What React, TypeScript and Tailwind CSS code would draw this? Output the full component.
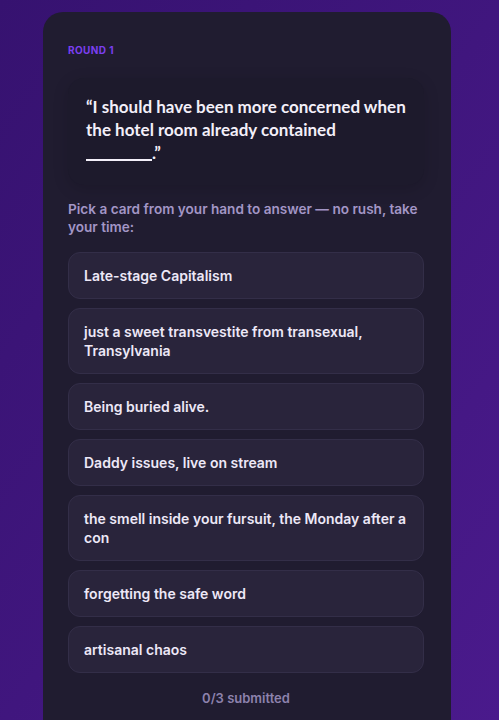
const cards = [
  'Late-stage Capitalism',
  'just a sweet transvestite from transexual, Transylvania',
  'Being buried alive.',
  'Daddy issues, live on stream',
  'the smell inside your fursuit, the Monday after a con',
  'forgetting the safe word',
  'artisanal chaos',
];

export default function App() {
  return (
    <div className="flex h-[720px] flex-col overflow-hidden bg-gradient-to-br from-[#361270] to-[#4a1a8c] px-[43px] pt-[12px] font-['Inter',sans-serif]">
      <div className="w-[408px] flex-1 rounded-t-[20px] bg-[#201c30] pl-[25px] pr-[27px] pt-[31px] pb-6">
        <div className="text-[10px] font-bold tracking-[0.04em] leading-[14px] text-[#7b3ff0]">ROUND 1</div>

        <div className="mt-[21px] rounded-2xl bg-[#1d1a2c] px-[18px] pt-[17px] pb-[21px] shadow-[0_4px_16px_rgba(0,0,0,0.15)]">
          <p className="font-['Lato',sans-serif] text-[17px] font-bold leading-[23px] text-[#f3eff9]">
            “I should have been more concerned when the hotel room already contained{' '}
            <span className="whitespace-nowrap">
              <span className="inline-block w-[66px] border-b-2 border-[#f3eff9] align-[-2px]" />.”
            </span>
          </p>
        </div>

        <p className="mt-[15px] text-[13.6px] font-semibold leading-[18px] text-[#a396c6]">
          Pick a card from your hand to answer — no rush, take your time:
        </p>

        <div className="mt-[16px] flex flex-col gap-[9px]">
          {cards.map((c) => (
            <button
              key={c}
              className="w-full rounded-xl border border-[#332e48] bg-[#29243b] px-[15px] py-[13px] text-left text-[14px] font-semibold leading-[19px] text-[#ede8f7]"
            >
              {c}
            </button>
          ))}
        </div>

        <div className="mt-[16px] text-center text-[13px] font-semibold leading-[18px] text-[#8d82ad]">0/3 submitted</div>
      </div>
    </div>
  );
}
